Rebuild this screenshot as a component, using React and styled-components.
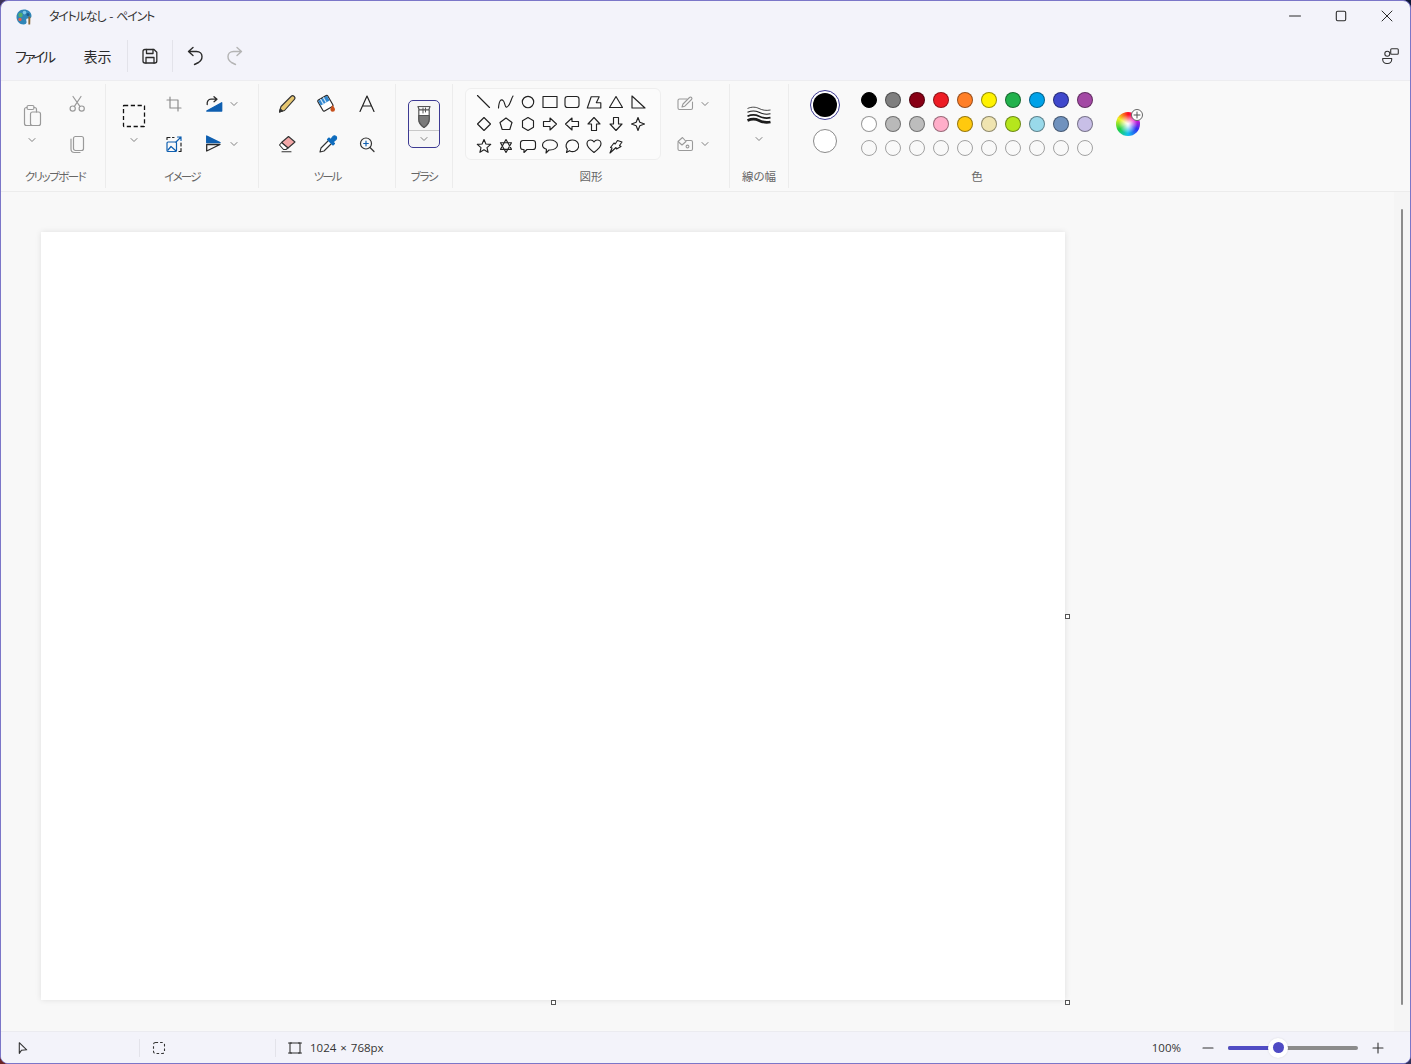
import React from "react";
import styled, { createGlobalStyle } from "styled-components";

const Global = createGlobalStyle`
  html, body { margin: 0; padding: 0; height: 100%; overflow: hidden; background: linear-gradient(45deg, #6b2424, #35355f 50%, #0d1738); }
  #root { height: 100%; }
  * { box-sizing: border-box; }
`;

const JP = `"Noto Sans CJK JP", "Noto Sans", sans-serif`;
const LATIN = `"Open Sans", "Noto Sans", sans-serif`;

const Window = styled.div`
  width: 1411px; height: 1064px;
  display: flex; flex-direction: column;
  border: 1px solid #7b76c8; border-radius: 8px; overflow: hidden;
  background: #f3f3fa; font-family: ${JP}; color: #222;
  font-feature-settings: "palt" 1;
`;
const TitleBar = styled.div`
  height: 31px; flex: none; display: flex; align-items: center; padding-left: 15px;
`;
const Title = styled.span`
  margin: 0 0 2px 17px; font-size: 12px; line-height: 16px; color: #333; letter-spacing: -1.2px; word-spacing: 2.5px;
`;
const WindowButtons = styled.div`margin-left: auto; display: flex;`;
const WindowButton = styled.div`
  width: 46px; height: 31px; display: flex; align-items: center; justify-content: center; padding-bottom: 1px;
`;
const MenuBar = styled.div`
  height: 48px; flex: none; display: flex; align-items: center; padding: 0 8px 0 14px;
`;
const MenuItem = styled.span`
  font-size: 14px; line-height: 20px; padding-bottom: 1px; margin-right: ${p => p.$gap}px; color: #2a2a2a;
  letter-spacing: ${p => p.$ls || 0}px;
`;
const VDivider = styled.div`
  width: 1px; height: ${p => p.$h}px; background: #e3e3ea; flex: none;
`;
const QuickButton = styled.div`
  width: 40px; height: 40px; display: flex; align-items: center; justify-content: center; flex: none;
  margin-left: ${p => p.$ml || 0}px; margin-right: ${p => p.$mr || 0}px;
`;
const MenuRight = styled.div`margin-left: auto; display: flex;`;

const Ribbon = styled.div`
  flex: none; height: 112px; display: flex; padding: 3px 0 3px;
  background: #f9f9f9; border-top: 1px solid #ededf0; border-bottom: 1px solid #ececec;
`;
const Group = styled.div`
  width: ${p => p.$w}px; margin-left: ${p => p.$ml || 0}px; flex: none; height: 104px;
  display: grid; grid-template-rows: 80px 24px;
  border-right: ${p => (p.$last ? "none" : "1px solid #ececec")};
`;
const GroupBody = styled.div`
  display: flex; padding-left: ${p => p.$pl || 0}px; justify-content: ${p => p.$center ? "center" : "flex-start"};
`;
const GroupLabel = styled.div`
  text-align: center; font-size: 11.5px; line-height: 24px; color: #666;
  letter-spacing: ${p => p.$ls || 0}px;
`;
const ToolGrid = styled.div`
  display: grid; grid-template-columns: ${p => p.$cols}; grid-auto-rows: 40px; column-gap: ${p => p.$gap || 0}px;
`;
const Tool = styled.div`
  display: flex; align-items: center; justify-content: center; width: 40px; height: 40px;
`;
const DropTool = styled.div`
  display: flex; align-items: center; height: 40px; gap: 2px; padding-left: ${p => p.$pl || 0}px;
`;
const LargeTool = styled.div`
  grid-row: span 2; width: 40px; height: 80px; display: flex; flex-direction: column; align-items: center;
  padding-top: 20px; gap: 6px;
`;
const BrushSlot = styled.div`padding: 16px 0 0 12px;`;
const BrushButton = styled.div`
  width: 32px; height: 48px; border: 1.3px solid #3d3a93; border-radius: 5px; background: #f6f6f6;
  display: grid; grid-template-rows: 30px 1fr; overflow: hidden;
`;
const BrushFace = styled.div`
  display: flex; align-items: center; justify-content: center; border-bottom: 1px solid #c8c8c8; padding-top: 2px;
`;
const BrushDrop = styled.div`display: flex; align-items: center; justify-content: center;`;
const Gallery = styled.div`
  margin: 4px 12px 0 12px; width: 196px; height: 72px; flex: none; padding: 2px 7px;
  background: #fbfbfb; border: 1px solid #eeeeee; border-radius: 6px;
  display: grid; grid-template-columns: repeat(8, 22px); grid-auto-rows: 22px;
`;
const ShapeCell = styled.div`display: flex; align-items: center; justify-content: center;`;
const ShapeStyles = styled.div`display: flex; flex-direction: column;`;
const StrokeTool = styled(LargeTool)`padding-top: 22px; gap: 7px;`;

const ColorsBody = styled.div`display: flex; padding-left: 21px;`;
const ActiveColors = styled.div`
  width: 30px; padding-top: 6px; display: flex; flex-direction: column; align-items: center; gap: 9px; flex: none;
`;
const ActiveRing = styled.div`
  width: 30px; height: 30px; border-radius: 50%; border: 1.3px solid #3d3a93; display: flex; align-items: center; justify-content: center; background: #fff;
`;
const ActiveDot = styled.div`width: 24px; height: 24px; border-radius: 50%; background: #000;`;
const SecondDot = styled.div`width: 24px; height: 24px; border-radius: 50%; background: #fff; border: 1px solid #8a8a8a;`;
const Palette = styled.div`
  margin: 8px 0 0 21px; display: grid; grid-template-columns: repeat(10, 16px); grid-auto-rows: 16px; gap: 8px; align-content: start;
`;
const Swatch = styled.div`
  border-radius: 50%; background: ${p => p.$c};
  border: 1px solid ${p => (p.$c === "none" ? "#a2a2a2" : p.$c === "#000000" ? "#000" : "rgba(0,0,0,.4)")};
`;
const Wheel = styled.div`
  position: relative; width: 24px; height: 24px; margin: 28px 0 0 23px; border-radius: 50%; flex: none;
  background: radial-gradient(circle, #fff 0%, rgba(255,255,255,.8) 14%, rgba(255,255,255,0) 55%),
    conic-gradient(#ff1020, #f010d0, #3030f0, #10c0f0, #20d040, #f0f020, #ff1020);
`;
const WheelBadge = styled.div`
  position: absolute; top: -3px; right: -3px; width: 12px; height: 12px; border-radius: 50%;
  background: #fff; border: 1px solid #666; display: flex; align-items: center; justify-content: center;
`;

const Workspace = styled.div`flex: 1; min-height: 0; display: flex; background: #f8f8f8;`;
const Stage = styled.div`flex: 1; padding: 40px;`;
const Canvas = styled.div`
  position: relative; width: 1024px; height: 768px; background: #fff;
  box-shadow: 0 0 6px rgba(0,0,0,.1);
`;
const Handle = styled.div`
  position: absolute; width: 5px; height: 5px; background: #fff; border: 1px solid #555;
  ${p => p.$right ? "right: -5px;" : "left: 510px;"}
  ${p => p.$bottom ? "bottom: -5px;" : "top: 382px;"}
`;
const ScrollTrack = styled.div`width: 16px; flex: none; background: #f5f5f5; padding: 17px 5px 0 7px;`;
const ScrollThumb = styled.div`width: 2px; height: 796px; border-radius: 1px; background: #8c8c8c;`;

const StatusBar = styled.div`
  height: 32px; flex: none; display: flex; align-items: center; padding-right: 24px;
  background: #f3f3fa; border-top: 1px solid #ebebf0;
`;
const StatusSlot = styled.div`
  width: ${p => p.$w}px; flex: none; display: flex; align-items: center; padding-left: ${p => p.$pl}px; gap: 7px;
`;
const StatusText = styled.span`font-family: ${LATIN}; font-size: 11.5px; line-height: 16px; padding-top: 1px; color: #333; font-feature-settings: normal; word-spacing: 1px;`;
const ZoomBox = styled.div`margin-left: auto; display: flex; align-items: center; gap: 12px;`;
const ZoomPct = styled(StatusText)`margin-right: 7px;`;
const Slider = styled.div`position: relative; width: 130px; height: 4px; border-radius: 2px; background: #8b8b8b;`;
const SliderFill = styled.div`width: 42px; height: 100%; border-radius: 2px; background: #4f4bc4;`;
const SliderThumb = styled.div`
  position: absolute; top: -8px; left: 40px; width: 20px; height: 20px; border-radius: 50%; background: #fff;
  display: flex; align-items: center; justify-content: center; box-shadow: 0 0 2px rgba(0,0,0,.12);
`;
const SliderKnob = styled.div`width: 11px; height: 11px; border-radius: 50%; background: #4f4bc4;`;

const Svg = styled.svg`display: block; flex: none; overflow: visible;`;
const Icon = ({ size = 24, color = "#2b2b2b", sw = 1.3, children }) => (
  <Svg width={size} height={size} viewBox={`0 0 ${size} ${size}`} fill="none" stroke={color} strokeWidth={sw} strokeLinejoin="round" strokeLinecap="round">
    {children}
  </Svg>
);
const GRAY = "#9a9a9a";
const BLUE = "#0f5fb0";
const Chevron = () => (
  <Icon size={12} color="#808080" sw={1}><path d="M3 4.5 L6 7.5 L9 4.5" /></Icon>
);

const Logo = () => (
  <Svg width="16" height="16" viewBox="0 0 16 16">
    <path d="M8 .5 C12 .5 15.5 3 15.5 7 C15.5 9.5 13 9.5 11.5 9.5 C10 9.5 10 11 10.5 12.5 C11 14.5 9.5 15.5 7.5 15.5 C3.5 15.5 .5 12 .5 8 C.5 4 3.5 .5 8 .5Z" fill="#2f86b8" />
    <circle cx="4.5" cy="6" r="2.2" fill="#4fae6e" />
    <circle cx="8.5" cy="3.6" r="1.8" fill="#7cc7e8" />
    <circle cx="4" cy="10.5" r="1.7" fill="#d9604f" />
    <circle cx="12" cy="5.4" r="1.5" fill="#1d5a8c" />
    <path d="M12.4 7.5 L14.4 7.8 L14.2 15.6 L12.4 15.6Z" fill="#8a6a3a" />
  </Svg>
);

const Save = () => (
  <Icon>
    <path d="M7 5.5 H16 L18.8 8.3 V17 a2 2 0 0 1 -2 2 H7 a2 2 0 0 1 -2 -2 V7.5 a2 2 0 0 1 2 -2Z" />
    <path d="M8.5 5.5 V9.5 H15 V5.5 M8 19 V13.5 H16 V19" />
  </Icon>
);
const Undo = ({ color, flip }) => (
  <Icon color={color} sw={1.4}>
    <g transform={flip ? "translate(24 0) scale(-1 1)" : undefined}>
      <path d="M10 3.5 L5.5 7.5 L10 11.5 M5.5 7.5 H13.5 C17 7.5 19 10 19 12.5 C19 15 18 17 15.5 18.5 L11.5 20.5" />
    </g>
  </Icon>
);
const Share = () => (
  <Icon sw={1.1} color="#333">
    <circle cx="9.3" cy="9.7" r="2.5" />
    <path d="M4.7 14.5 H13.7 V15.5 a4 4 0 0 1 -4 4 H8.7 a4 4 0 0 1 -4 -4Z" />
    <rect x="12.7" y="4.7" width="7.6" height="5.6" rx="1" />
  </Icon>
);
const Paste = () => (
  <Icon color={GRAY} sw={1.2}>
    <path d="M7 3.5 H6.5 a2 2 0 0 0 -2 2 V19.5 a2 2 0 0 0 2 2 H10.5 M14 3.5 H14.5 a2 2 0 0 1 2 2 V8" />
    <rect x="7" y="1.5" width="7" height="4" rx="1.5" />
    <rect x="10.5" y="8" width="10" height="13.5" rx="2" />
  </Icon>
);
const Cut = () => (
  <Icon color={GRAY} sw={1.2}>
    <circle cx="7.7" cy="16.6" r="2.6" /><circle cx="16.7" cy="16.6" r="2.6" />
    <path d="M8 4.5 L14.9 14.3 M16 4.5 L9.4 14.3" />
  </Icon>
);
const Copy = () => (
  <Icon color={GRAY} sw={1.2}>
    <rect x="8.5" y="4.5" width="10" height="14" rx="2" />
    <path d="M6 7 V17 a3.5 3.5 0 0 0 3.5 3.5 H15" />
  </Icon>
);
const SelectIcon = () => (
  <Icon color="#111" sw={1.3}>
    <rect x="1.5" y="1.5" width="21" height="21" rx=".5" strokeDasharray="4.2 2.6" strokeLinecap="butt" />
  </Icon>
);
const Crop = () => (
  <Icon color="#8d8d8d" sw={1.2}><path d="M8 5 V16 H19 M5 8 H16 V19" /></Icon>
);
const Resize = () => (
  <Icon color={BLUE} sw={1.2}>
    <rect x="5" y="10" width="9.5" height="9.5" rx="1" />
    <path d="M6 18 L9 14.5 L13.5 18.5" /><path d="M14 10 L19 5 M15.5 5 H19 V8.5" />
    <path d="M5 7.5 V5.5 H8 M10.5 5.5 H12 M19 11 V14 M19 16.5 V19.5 H17" stroke="#222" />
  </Icon>
);
const Rotate = () => (
  <Icon>
    <path d="M4.7 19 H19.7 V10.7Z" fill={BLUE} stroke={BLUE} />
    <path d="M5.2 12.5 C4.8 9 6.5 7.2 9 7.2 H14.5 M12 4.7 L15 7.2 L12 9.7" />
  </Icon>
);
const Flip = () => (
  <Icon>
    <path d="M4.7 4 L18 10.7 H4.7Z" fill={BLUE} stroke={BLUE} />
    <path d="M4.7 12.5 H18 L4.7 19Z" />
  </Icon>
);
const Pencil = () => (
  <Icon sw={1.1} color="#333">
    <path d="M4.5 20 L6 14.5 L16 4.5 a2.2 2.2 0 0 1 3.2 3.2 L9.5 18.5Z" fill="#e6c670" />
    <path d="M4.5 20 L5.3 17 L7.5 19Z" fill="#333" />
  </Icon>
);
const Bucket = () => (
  <Icon sw={1.2} color="#2c2c2c">
    <g transform="rotate(-30 10.5 11.5)">
      <rect x="4.8" y="5" width="11.4" height="12.5" rx="1.2" fill="#fff" />
      <rect x="5.4" y="5.6" width="10.2" height="5.4" fill="#2f86cf" stroke="none" />
      <path d="M8.4 5.6 V11 M11.6 5.6 V11" stroke="#cfe6f8" />
    </g>
    <path d="M17.6 13 C16.4 15 15.4 16 15.4 17.4 a2.3 2.3 0 0 0 4.6 0 C20 16 18.8 15 17.6 13Z" fill="#c8501c" stroke="none" />
  </Icon>
);
const TextA = () => (
  <Icon color="#222" sw={1.2} ><path d="M5 19.5 L12 4 L19 19.5 M7.7 14 H16.3" /></Icon>
);
const Eraser = () => (
  <Icon sw={1.1} color="#333">
    <path d="M13.5 4.5 L20 10 L13 16 L6.5 10.5Z" fill="#f2a7a7" />
    <path d="M6.5 10.5 L13 16 L11 17.5 H8.5 L4.5 13Z" fill="#fff" />
    <path d="M7 19.7 H16" />
  </Icon>
);
const Picker = () => (
  <Icon sw={1.1} color="#333">
    <path d="M5 20 L6 16 L14 8 L17 11 L9 19Z" fill="#fff" />
    <path d="M14 6 L15.5 7.5 L18 4.5 a2 2 0 0 1 3 3 L18 10 L19.5 11.5 L18 13 L12.5 7.5Z" fill="#0f6cbd" stroke="#0f6cbd" />
  </Icon>
);
const Magnifier = () => (
  <Icon sw={1.2} color="#333">
    <circle cx="11" cy="11.5" r="5.5" /><path d="M15 15.5 L19 19.5" />
    <path d="M8.7 11.5 H13.3 M11 9.2 V13.8" stroke={BLUE} />
  </Icon>
);
const Brush = () => (
  <Icon size={24} sw={1.2} color="#555">
    <path d="M6 1.5 H18 L16.8 5 H7.2Z" fill="#eeeeee" />
    <path d="M6.8 5 H17.2 V14 Q17.2 19 12 22.5 Q6.8 19 6.8 14Z" fill="#fff" />
    <path d="M6.8 10.5 H17.2 V14 Q17.2 19 12 22.5 Q6.8 19 6.8 14Z" fill="#7a7a7a" />
    <path d="M11 3 V8 M13.5 3 V7" strokeWidth="1" />
  </Icon>
);
const Outline = () => (
  <Icon color={GRAY} sw={1.1}>
    <path d="M14 7 H6.5 a1.5 1.5 0 0 0 -1.5 1.5 V16 a1.5 1.5 0 0 0 1.5 1.5 H18 a1.5 1.5 0 0 0 1.5 -1.5 V10" />
    <path d="M9 15 L10 12 L16.5 5.5 a1.3 1.3 0 0 1 2 2 L11.8 14.2Z" />
  </Icon>
);
const FillStyle = () => (
  <Icon color={GRAY} sw={1.1}>
    <path d="M13 8.5 H18 a1.5 1.5 0 0 1 1.5 1.5 V17 a1.5 1.5 0 0 1 -1.5 1.5 H6.5 a1.5 1.5 0 0 1 -1.5 -1.5 V10.5" />
    <path d="M5 9.5 L9.5 5.5 L13 9.5 L9 13Z" />
    <circle cx="14.5" cy="14.5" r="1.4" />
  </Icon>
);
const StrokeWidths = () => (
  <Svg width="24" height="20" viewBox="0 0 24 20" fill="none" stroke="#1c1c1c">
    <path d="M.5 2.5 C5 .5 9 1 12 2.5 S19 5 23.5 4" strokeWidth=".8" />
    <path d="M.5 6.3 C5 4.3 9 4.8 12 6.3 S19 8.8 23.5 7.8" strokeWidth="1.1" />
    <path d="M.5 10.2 C5 8.2 9 8.7 12 10.2 S19 12.7 23.5 11.7" strokeWidth="1.7" />
    <path d="M.5 14.5 C5 12.5 9 13 12 14.5 S19 17 23.5 16" strokeWidth="2.6" />
  </Svg>
);
const CursorIcon = () => (
  <Icon size={16} sw={1.1} color="#333"><path d="M5.3 2.7 L12.7 9.8 L7.6 10.2 L5.3 13.3Z" /></Icon>
);
const SelStatus = () => (
  <Icon size={16} sw={1.1} color="#333"><rect x="2.5" y="2.5" width="11" height="11" rx="2" strokeDasharray="2.6 2" strokeLinecap="butt" /></Icon>
);
const SizeIcon = () => (
  <Icon size={16} sw={1.1} color="#333">
    <rect x="3" y="3" width="10" height="10" /><path d="M1.5 3 H4.5 M11.5 3 H14.5 M1.5 13 H4.5 M11.5 13 H14.5" />
  </Icon>
);

const SHAPES = [
  "M2.5 2.5 L14.5 14.5",
  "M1.5 15 C2 8 4 5 6.5 8 C8 10 8 15 10 14 C13 13 14 6 16 3",
  "M14.7 9 A5.7 5.7 0 1 1 3.3 9 A5.7 5.7 0 1 1 14.7 9Z",
  "M2 3.5 H16 V14.5 H2Z",
  "M4.5 3.5 H13.5 A2.5 2.5 0 0 1 16 6 V12 A2.5 2.5 0 0 1 13.5 14.5 H4.5 A2.5 2.5 0 0 1 2 12 V6 A2.5 2.5 0 0 1 4.5 3.5Z",
  "M2.3 15 L6.2 3.7 H14.2 L11.3 9.7 H15.8 V15Z",
  "M9 3.5 L15.5 14.5 H2.5Z",
  "M3 3 V15 H16Z",
  "M9 2.5 L15.5 9 L9 15.5 L2.5 9Z",
  "M9 3 L15 7.5 L12.8 14.5 H5.2 L3 7.5Z",
  "M9 2.5 L14.5 5.7 V12.3 L9 15.5 L3.5 12.3 V5.7Z",
  "M2.5 6.5 H9 V3 L15.5 9 L9 15 V11.5 H2.5Z",
  "M15.5 6.5 H9 V3 L2.5 9 L9 15 V11.5 H15.5Z",
  "M6.5 15.5 V9 H3 L9 2.5 L15 9 H11.5 V15.5Z",
  "M6.5 2.5 V9 H3 L9 15.5 L15 9 H11.5 V2.5Z",
  "M9 2.5 L10.8 7.2 L15.5 9 L10.8 10.8 L9 15.5 L7.2 10.8 L2.5 9 L7.2 7.2Z",
  "M9 2.5 L10.9 7 L15.7 7.4 L12 10.6 L13.1 15.3 L9 12.8 L4.9 15.3 L6 10.6 L2.3 7.4 L7.1 7Z",
  "M9 2.5 L14.5 12.3 H3.5Z M9 15.5 L3.5 5.7 H14.5Z",
  "M4 3.5 H14 A2.5 2.5 0 0 1 16.5 6 V10 A2.5 2.5 0 0 1 14 12.5 H8 L5 15.5 V12.5 H4 A2.5 2.5 0 0 1 1.5 10 V6 A2.5 2.5 0 0 1 4 3.5Z",
  "M9 3 C13 3 16.5 5 16.5 8 C16.5 11 13 13 9 13 L8 13 L5 16 L5.5 12.3 C3 11.5 1.5 10 1.5 8 C1.5 5 5 3 9 3Z",
  "M9.5 3 A6 5.8 0 1 1 6.5 13.7 L3.5 15.5 L4.3 12.2 A6 5.8 0 0 1 9.5 3Z",
  "M9 15.5 C5 12.5 2 10 2 6.8 C2 4.5 3.8 3 5.7 3 C7.2 3 8.3 3.8 9 5 C9.7 3.8 10.8 3 12.3 3 C14.2 3 16 4.5 16 6.8 C16 10 13 12.5 9 15.5Z",
  "M3 16 L5 11 L3.5 10.5 L7 6 L8.2 7 L10.5 3.5 L15 5 L12.5 8.5 L14 9.5 L9.5 12 L9 10.5Z",
];
const COLORS = [
  "#000000", "#7f7f7f", "#880015", "#ed1c24", "#ff7f27", "#fff200", "#22b14c", "#00a2e8", "#3f48cc", "#a349a4",
  "#ffffff", "#b9b9b9", "#bdbdbd", "#ffaec9", "#ffc90e", "#efe4b0", "#b5e61d", "#99d9ea", "#7092be", "#c8bfe7",
  ...Array(10).fill("none"),
];

export default function App() {
  return (
    <>
      <Global />
      <Window>
        <TitleBar>
          <Logo />
          <Title>タイトルなし - ペイント</Title>
          <WindowButtons>
            <WindowButton><Icon size={12} sw={1}><path d="M.5 6 H11.5" /></Icon></WindowButton>
            <WindowButton><Icon size={12} sw={1.1}><rect x="1.3" y="1.3" width="9.4" height="9.4" rx="1.4" /></Icon></WindowButton>
            <WindowButton><Icon size={12} sw={1}><path d="M1 1 L11 11 M11 1 L1 11" /></Icon></WindowButton>
          </WindowButtons>
        </TitleBar>
        <MenuBar>
          <MenuItem $gap={30} $ls={-2.5}>ファイル</MenuItem>
          <MenuItem $gap={16}>表示</MenuItem>
          <VDivider $h={32} />
          <QuickButton $ml={2} $mr={2}><Save /></QuickButton>
          <VDivider $h={32} />
          <QuickButton $ml={2}><Undo /></QuickButton>
          <QuickButton><Undo flip color="#b4b4b4" /></QuickButton>
          <MenuRight><Share /></MenuRight>
        </MenuBar>
        <Ribbon>
          <Group $w={101} $ml={4}>
            <GroupBody $pl={7}>
              <ToolGrid $cols="40px 40px" $gap={5}>
                <LargeTool><Paste /><Chevron /></LargeTool>
                <Tool><Cut /></Tool>
                <Tool><Copy /></Tool>
              </ToolGrid>
            </GroupBody>
            <GroupLabel $ls={-1.5}>クリップボード</GroupLabel>
          </Group>
          <Group $w={153}>
            <GroupBody $pl={8}>
              <ToolGrid $cols="40px 40px auto">
                <LargeTool><SelectIcon /><Chevron /></LargeTool>
                <Tool><Crop /></Tool>
                <DropTool $pl={8}><Rotate /><Chevron /></DropTool>
                <Tool><Resize /></Tool>
                <DropTool $pl={8}><Flip /><Chevron /></DropTool>
              </ToolGrid>
            </GroupBody>
            <GroupLabel $ls={-1.7}>イメージ</GroupLabel>
          </Group>
          <Group $w={137}>
            <GroupBody $pl={8}>
              <ToolGrid $cols="repeat(3, 40px)">
                <Tool><Pencil /></Tool><Tool><Bucket /></Tool><Tool><TextA /></Tool>
                <Tool><Eraser /></Tool><Tool><Picker /></Tool><Tool><Magnifier /></Tool>
              </ToolGrid>
            </GroupBody>
            <GroupLabel $ls={-2}>ツール</GroupLabel>
          </Group>
          <Group $w={57}>
            <BrushSlot>
              <BrushButton>
                <BrushFace><Brush /></BrushFace>
                <BrushDrop><Chevron /></BrushDrop>
              </BrushButton>
            </BrushSlot>
            <GroupLabel $ls={-1.3}>ブラシ</GroupLabel>
          </Group>
          <Group $w={277}>
            <GroupBody>
              <Gallery>
                {SHAPES.map((d, i) => (
                  <ShapeCell key={i}><Icon size={18} sw={1.15} color="#222"><path d={d} /></Icon></ShapeCell>
                ))}
              </Gallery>
              <ShapeStyles>
                <DropTool><Outline /><Chevron /></DropTool>
                <DropTool><FillStyle /><Chevron /></DropTool>
              </ShapeStyles>
            </GroupBody>
            <GroupLabel>図形</GroupLabel>
          </Group>
          <Group $w={59}>
            <GroupBody $center>
              <StrokeTool><StrokeWidths /><Chevron /></StrokeTool>
            </GroupBody>
            <GroupLabel>線の幅</GroupLabel>
          </Group>
          <Group $w={376} $last>
            <ColorsBody>
              <ActiveColors>
                <ActiveRing><ActiveDot /></ActiveRing>
                <SecondDot />
              </ActiveColors>
              <Palette>
                {COLORS.map((c, i) => <Swatch key={i} $c={c} />)}
              </Palette>
              <Wheel>
                <WheelBadge>
                  <Icon size={8} sw={1} color="#555"><path d="M4 1 V7 M1 4 H7" /></Icon>
                </WheelBadge>
              </Wheel>
            </ColorsBody>
            <GroupLabel>色</GroupLabel>
          </Group>
        </Ribbon>
        <Workspace>
          <Stage>
            <Canvas>
              <Handle $right />
              <Handle $bottom />
              <Handle $right $bottom />
            </Canvas>
          </Stage>
          <ScrollTrack><ScrollThumb /></ScrollTrack>
        </Workspace>
        <StatusBar>
          <StatusSlot $w={138} $pl={13}><CursorIcon /></StatusSlot>
          <VDivider $h={18} />
          <StatusSlot $w={135} $pl={11}><SelStatus /></StatusSlot>
          <VDivider $h={18} />
          <StatusSlot $w={200} $pl={11}><SizeIcon /><StatusText>1024 × 768px</StatusText></StatusSlot>
          <ZoomBox>
            <ZoomPct>100%</ZoomPct>
            <Icon size={16} sw={1.1} color="#333"><path d="M3 8 H13" /></Icon>
            <Slider>
              <SliderFill />
              <SliderThumb><SliderKnob /></SliderThumb>
            </Slider>
            <Icon size={16} sw={1.1} color="#333"><path d="M3 8 H13 M8 3 V13" /></Icon>
          </ZoomBox>
        </StatusBar>
      </Window>
    </>
  );
}
